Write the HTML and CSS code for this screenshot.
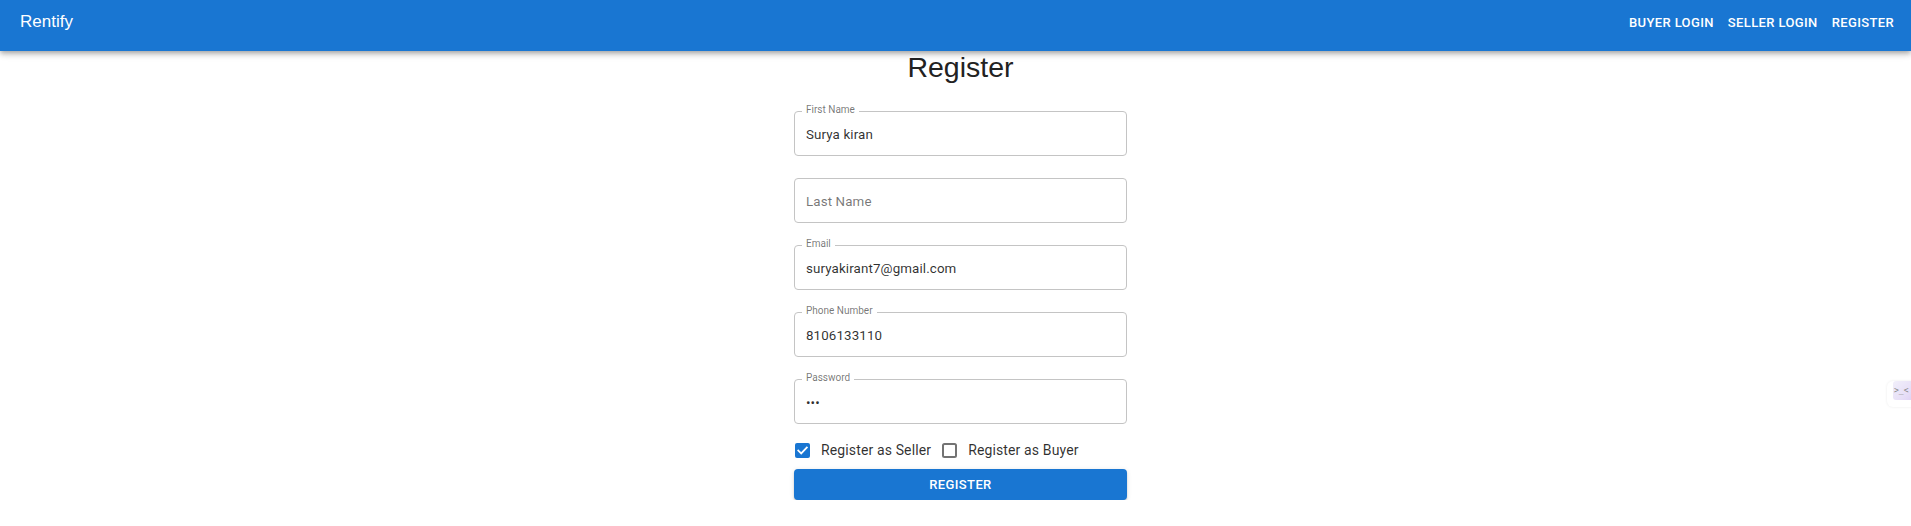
FILE: index.html
```html
<!DOCTYPE html>
<html lang="en">
<head>
<meta charset="utf-8">
<title>Rentify - Register</title>
<link rel="stylesheet" href="styles.css">
</head>
<body>
<header class="appbar">
  <div class="brand">Rentify</div>
  <nav class="nav">
    <a class="nav-btn" href="#">Buyer Login</a>
    <a class="nav-btn" href="#">Seller Login</a>
    <a class="nav-btn" href="#">Register</a>
  </nav>
</header>
<main class="page">
  <h1 class="title">Register</h1>
  <form class="form">
    <div class="field">
      <span class="float-label">First Name</span>
      <input class="input" type="text" value="Surya kiran">
    </div>
    <div class="field">
      <input class="input" type="text" placeholder="Last Name">
    </div>
    <div class="field">
      <span class="float-label">Email</span>
      <input class="input" type="email" value="suryakirant7@gmail.com">
    </div>
    <div class="field">
      <span class="float-label">Phone Number</span>
      <input class="input" type="text" value="8106133110">
    </div>
    <div class="field field-last">
      <span class="float-label">Password</span>
      <input class="input" type="password" value="abc">
    </div>
    <div class="checks">
      <label class="check">
        <svg class="box" width="15" height="15" viewBox="0 0 15 15"><rect x="0" y="0" width="15" height="15" rx="2" fill="#1976d2"/><path d="M3.3 7.6 L6.2 10.4 L11.8 4.6" fill="none" stroke="#fff" stroke-width="1.8" stroke-linecap="square"/></svg>
        <span>Register as Seller</span>
      </label>
      <label class="check">
        <svg class="box" width="15" height="15" viewBox="0 0 15 15"><rect x="1" y="1" width="13" height="13" rx="1.5" fill="none" stroke="#737373" stroke-width="2"/></svg>
        <span>Register as Buyer</span>
      </label>
    </div>
    <button class="submit" type="button">Register</button>
  </form>
</main>
<div class="widget"><div class="widget-face">&gt;_&lt;</div></div>
</body>
</html>
```
FILE: styles.css
```css
html, body {
  margin: 0;
  padding: 0;
  background: #fff;
}
body {
  font-family: Roboto, "Liberation Sans", Arial, sans-serif;
  color: rgba(0, 0, 0, 0.87);
}
.appbar {
  height: 51px;
  background: #1976d2;
  color: #fff;
  display: flex;
  align-items: flex-start;
  justify-content: space-between;
  padding: 0 10px 0 20px;
  box-sizing: border-box;
  box-shadow: 0 2px 4px -1px rgba(0,0,0,0.2), 0 4px 5px 0 rgba(0,0,0,0.14), 0 1px 10px 0 rgba(0,0,0,0.12);
  position: relative;
  z-index: 2;
}
.brand {
  font-family: "Liberation Sans", Arial, sans-serif;
  font-size: 17px;
  font-weight: 400;
  line-height: 28px;
  padding-top: 8px;
}
.nav {
  display: flex;
  padding-top: 12px;
}
.nav-btn {
  color: #fff;
  text-decoration: none;
  text-transform: uppercase;
  font-size: 13px;
  font-weight: 500;
  letter-spacing: 0.02857em;
  line-height: 22px;
  padding: 0 7px;
}
.page {
  display: flex;
  flex-direction: column;
  align-items: center;
  padding-left: 10px;
}
.title {
  margin: 0;
  font-family: "Liberation Sans", Arial, sans-serif;
  font-size: 28.5px;
  font-weight: 400;
  line-height: 33px;
  color: #222;
}
.form {
  width: 333px;
  margin-top: 27px;
  display: flex;
  flex-direction: column;
}
.field {
  position: relative;
  height: 45px;
  box-sizing: border-box;
  border: 1px solid #c4c4c4;
  border-radius: 4px;
  margin-bottom: 22px;
}
.field-last {
  margin-bottom: 0;
}
.float-label {
  position: absolute;
  top: -8px;
  left: 7px;
  padding: 0 4px;
  background: #fff;
  font-size: 10px;
  line-height: 12px;
  color: rgba(0, 0, 0, 0.55);
}
.input {
  width: 100%;
  height: 100%;
  box-sizing: border-box;
  border: 0;
  outline: none;
  background: transparent;
  padding: 2px 11px 0;
  font-family: Roboto, "Liberation Sans", Arial, sans-serif;
  font-size: 13.333px;
  letter-spacing: 0.00938em;
  color: rgba(0, 0, 0, 0.82);
}
.input::placeholder {
  color: rgba(0, 0, 0, 0.55);
  opacity: 1;
}
.checks {
  display: flex;
  align-items: center;
  height: 20px;
  margin-top: 16px;
  gap: 10px;
}
.check {
  display: flex;
  align-items: center;
  gap: 11px;
  font-size: 14px;
  letter-spacing: 0.00938em;
  color: rgba(0, 0, 0, 0.82);
}
.box {
  display: block;
  margin-left: 1px;
}
.submit {
  margin-top: 9px;
  height: 31px;
  border: 0;
  border-radius: 4px;
  background: #1976d2;
  color: #fff;
  font-family: Roboto, "Liberation Sans", Arial, sans-serif;
  font-size: 13px;
  font-weight: 500;
  letter-spacing: 0.02857em;
  text-transform: uppercase;
  box-shadow: 0 3px 1px -2px rgba(0,0,0,0.2), 0 2px 2px 0 rgba(0,0,0,0.14), 0 1px 5px 0 rgba(0,0,0,0.12);
  cursor: pointer;
}
.widget {
  position: absolute;
  left: 1887px;
  top: 381px;
  width: 30px;
  height: 26px;
  background: #fff;
  border-radius: 6px;
  box-shadow: 0 0 3px rgba(0,0,0,0.08);
  overflow: hidden;
}
.widget-face {
  margin: 0 0 0 6px;
  height: 19px;
  border-radius: 3px 0 0 3px;
  background: linear-gradient(135deg, #f1effa 0%, #e7dff7 60%, #dccdf3 100%);
  font-family: "DejaVu Sans Mono", monospace;
  font-size: 8px;
  line-height: 19px;
  color: #8a8a8a;
  padding-left: 1px;
  white-space: nowrap;
}
```
